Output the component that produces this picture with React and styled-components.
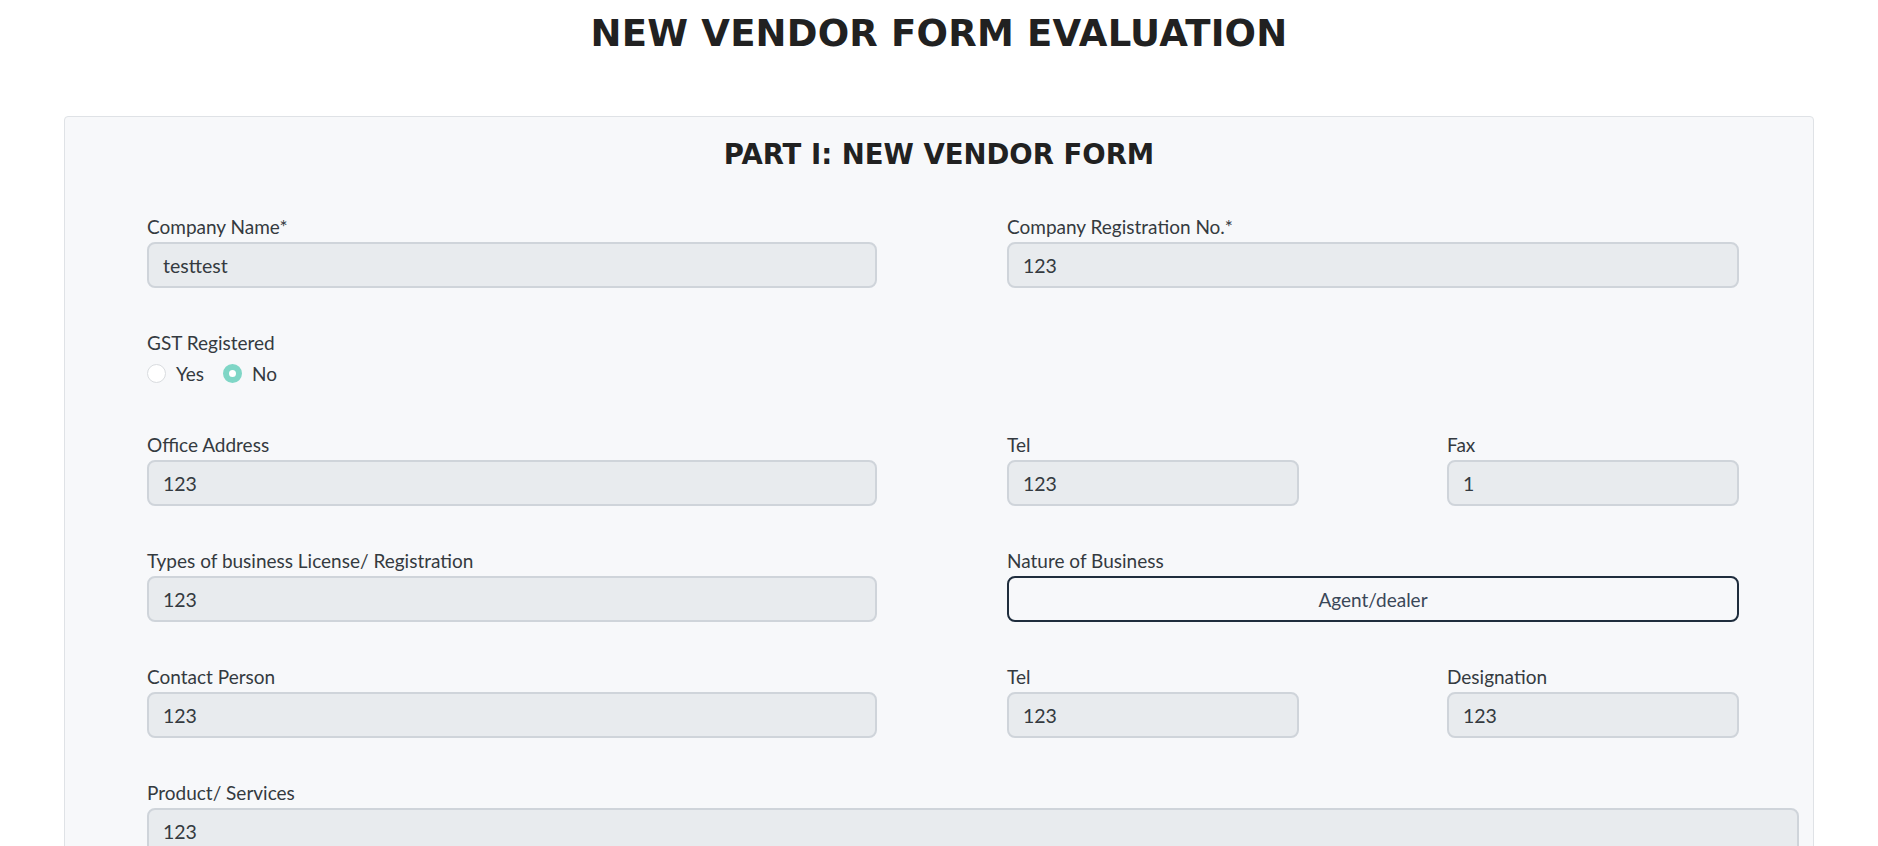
import React from "react";
import styled, { createGlobalStyle } from "styled-components";

const GlobalStyle = createGlobalStyle`
  html, body { margin: 0; padding: 0; background: #ffffff; }
  body { font-family: Lato, "Open Sans", sans-serif; color: #343a40; }
  * { box-sizing: border-box; }
`;

const Page = styled.div`
  padding: 10px 64px 40px;
`;

const Title = styled.h1`
  margin: 0 0 58px;
  text-align: center;
  font-family: "DejaVu Sans", Inter, sans-serif;
  font-weight: 700;
  font-size: 37px;
  line-height: 48px;
  letter-spacing: 0.2px;
  color: #212121;
`;

const Card = styled.section`
  background: #f7f8fa;
  border: 1px solid #dfe2e6;
  border-radius: 4px;
  padding: 20px 14px 40px 14px;
`;

const CardTitle = styled.h3`
  margin: 0 0 43px;
  text-align: center;
  font-family: "DejaVu Sans", Inter, sans-serif;
  font-weight: 700;
  font-size: 27.5px;
  line-height: 34px;
  color: #212121;
`;

const Form = styled.div`
  padding-left: 68px;
`;

const Row = styled.div`
  display: grid;
  grid-template-columns: 730px 732px;
  column-gap: 130px;
`;

const SubRow = styled.div`
  display: grid;
  grid-template-columns: 292px 292px;
  justify-content: space-between;
`;

const Field = styled.div`
  margin-bottom: ${(p) => (p.$mb != null ? p.$mb : 42)}px;
`;

const Label = styled.label`
  display: block;
  font-size: 19px;
  line-height: 26px;
  margin-bottom: 2px;
  color: #343a40;
`;

const Input = styled.input`
  display: block;
  width: 100%;
  height: 46px;
  padding: 0 14px;
  border: 2px solid #cfd4da;
  border-radius: 8px;
  background: #e8ebee;
  font-family: Lato, sans-serif;
  font-size: 19.5px;
  color: #343a40;
  outline: none;
`;

const SelectBox = styled.div`
  display: flex;
  align-items: center;
  justify-content: center;
  width: 100%;
  height: 46px;
  border: 2px solid #1f2d3d;
  border-radius: 8px;
  background: transparent;
  font-size: 19px;
  color: #3a4758;
`;

const RadioGroup = styled.div`
  display: flex;
  align-items: center;
  height: 30px;
`;

const RadioOption = styled.label`
  display: flex;
  align-items: center;
  font-size: 19px;
  color: #343a40;
  margin-right: 19px;
`;

const RadioDot = styled.span`
  width: 19px;
  height: 19px;
  border-radius: 50%;
  margin-right: 10px;
  background: #ffffff;
  border: ${(p) => (p.$checked ? "6px solid #7fd6c6" : "1px solid #d9dcdf")};
`;

const Radio = ({ checked, children }) => (
  <RadioOption>
    <RadioDot $checked={checked} />
    {children}
  </RadioOption>
);

const TextField = ({ label, value }) => (
  <Field>
    <Label>{label}</Label>
    <Input defaultValue={value} readOnly />
  </Field>
);

export default function App() {
  return (
    <>
      <GlobalStyle />
      <Page>
        <Title>NEW VENDOR FORM EVALUATION</Title>
        <Card>
          <CardTitle>PART I: NEW VENDOR FORM</CardTitle>
          <Form>
            <Row>
              <TextField label="Company Name*" value="testtest" />
              <TextField label="Company Registration No.*" value="123" />
            </Row>
            <Field $mb={44}>
              <Label>GST Registered</Label>
              <RadioGroup>
                <Radio>Yes</Radio>
                <Radio checked>No</Radio>
              </RadioGroup>
            </Field>
            <Row>
              <TextField label="Office Address" value="123" />
              <SubRow>
                <TextField label="Tel" value="123" />
                <TextField label="Fax" value="1" />
              </SubRow>
            </Row>
            <Row>
              <TextField label="Types of business License/ Registration" value="123" />
              <Field>
                <Label>Nature of Business</Label>
                <SelectBox>Agent/dealer</SelectBox>
              </Field>
            </Row>
            <Row>
              <TextField label="Contact Person" value="123" />
              <SubRow>
                <TextField label="Tel" value="123" />
                <TextField label="Designation" value="123" />
              </SubRow>
            </Row>
            <TextField label="Product/ Services" value="123" />
          </Form>
        </Card>
      </Page>
    </>
  );
}
